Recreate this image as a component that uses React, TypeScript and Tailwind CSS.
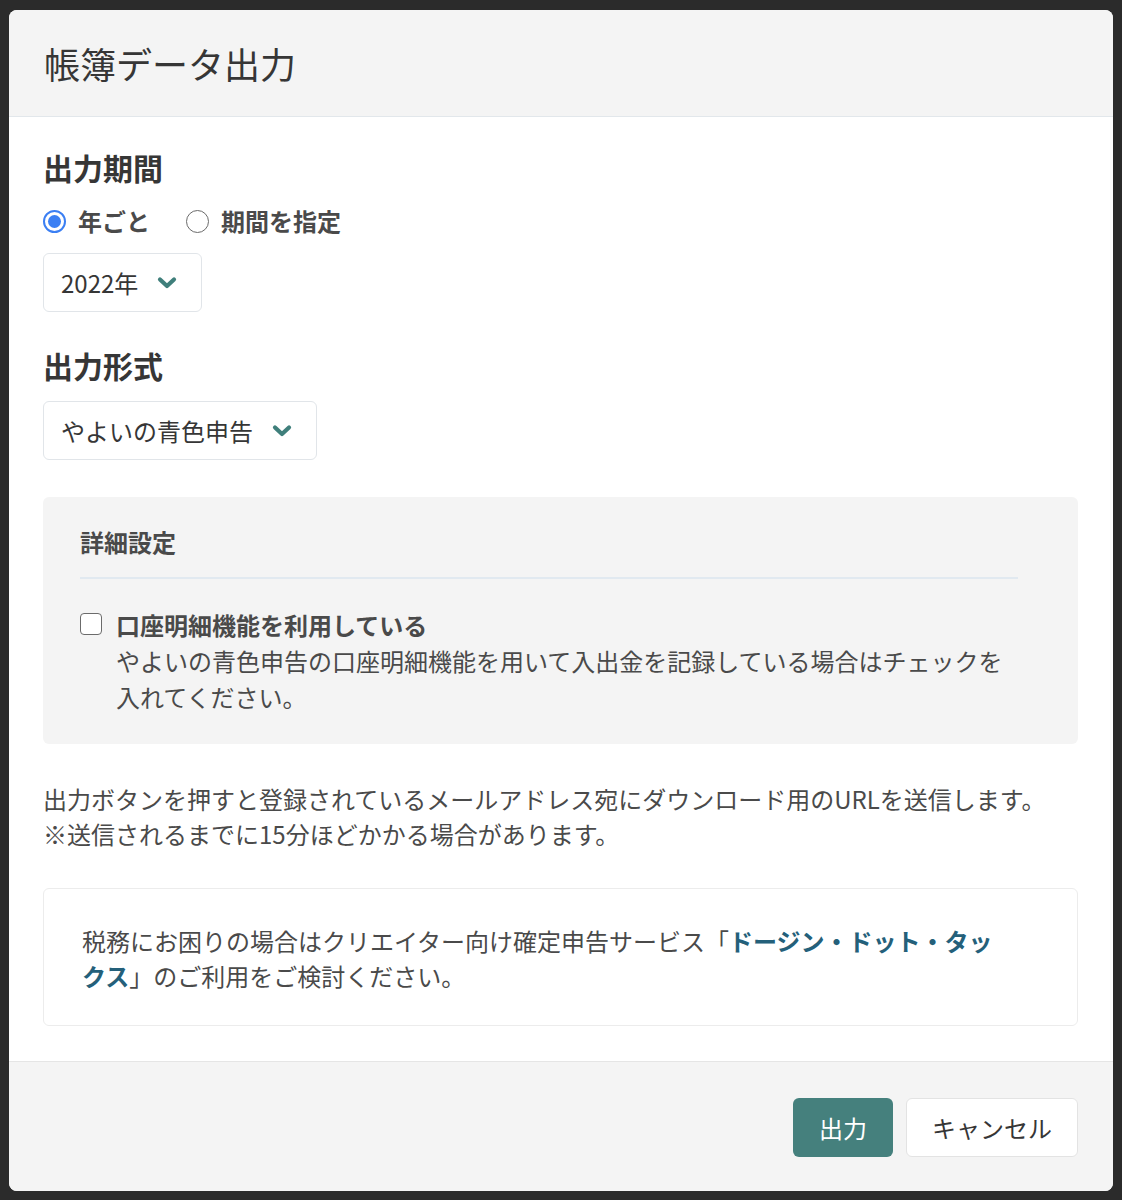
import React from "react";

const FONT = { fontFamily: '"Noto Sans CJK JP", "Noto Sans", sans-serif' };

function Chevron() {
  return (
    <svg width="20" height="14" viewBox="0 0 20 14" className="shrink-0">
      <path d="M3 3.5 L10 10 L17 3.5" fill="none" stroke="#3f7f7b" strokeWidth="4.2" strokeLinecap="round" strokeLinejoin="round" />
    </svg>
  );
}

function Select({ label }: { label: string }) {
  return (
    <div className="inline-flex h-[59px] items-center gap-[19px] rounded-[6px] border border-[#e1e5e9] bg-white pl-[17px] pr-[24px] text-[24px] text-[#363636]">
      <span>{label}</span>
      <Chevron />
    </div>
  );
}

function Radio({ checked, label }: { checked?: boolean; label: string }) {
  return (
    <label className="flex items-center gap-[12px]">
      {checked ? (
        <span className="flex size-[23px] items-center justify-center rounded-full border-2 border-[#3b7ff3] bg-white">
          <span className="size-[13px] rounded-full bg-[#3b7ff3]" />
        </span>
      ) : (
        <span className="size-[23px] rounded-full border-[1.5px] border-[#6b6b6b] bg-white" />
      )}
      <span className="text-[24px] font-bold text-[#4a4a4a]">{label}</span>
    </label>
  );
}

export default function App() {
  return (
    <div className="min-h-[1200px] bg-[#2b2b2b] px-[9px] pt-[10px]" style={FONT}>
      <div className="w-[1104px] overflow-hidden rounded-[8px] bg-white">
        <div className="flex h-[107px] items-center border-b border-[#e2e7eb] bg-[#f4f4f4] px-[35px]">
          <h1 className="text-[36px] font-normal text-[#363636]">帳簿データ出力</h1>
        </div>

        <div className="px-[34px] pb-[35px] pt-[28px] text-[#4a4a4a]">
          <h2 className="text-[30px] font-bold leading-[45px] text-[#363636]">出力期間</h2>
          <div className="mt-[13px] flex h-[36px] items-center gap-[36px]">
            <Radio checked label="年ごと" />
            <Radio label="期間を指定" />
          </div>
          <div className="mt-[14px]">
            <Select label="2022年" />
          </div>

          <h2 className="mt-[31px] text-[30px] font-bold leading-[45px] text-[#363636]">出力形式</h2>
          <div className="mt-[13px]">
            <Select label="やよいの青色申告" />
          </div>

          <div className="mt-[37px] w-[1035px] rounded-[6px] bg-[#f4f4f4] pb-[29px] pl-[37px] pr-[60px] pt-[27px]">
            <h3 className="text-[24px] font-bold leading-[36px] text-[#4a4a4a]">詳細設定</h3>
            <div className="mt-[17px] h-[2px] bg-[#e1e9f0]" />
            <div className="mt-[28px] flex gap-[14px]">
              <span className="mt-[6px] size-[22px] shrink-0 rounded-[4px] border-[1.5px] border-[#6b6b6b] bg-white" />
              <div>
                <div className="text-[24px] font-bold leading-[36px] text-[#4a4a4a]">口座明細機能を利用している</div>
                <p className="text-[24px] leading-[36px] text-[#4a4a4a]">
                  やよいの青色申告の口座明細機能を用いて入出金を記録している場合はチェックを入れてください。
                </p>
              </div>
            </div>
          </div>

          <p className="mt-[37px] text-[24px] leading-[35px] text-[#4a4a4a]">
            出力ボタンを押すと登録されているメールアドレス宛にダウンロード用のURLを送信します。
            <br />
            ※送信されるまでに15分ほどかかる場合があります。
          </p>

          <div className="mt-[37px] w-[1035px] rounded-[6px] border border-[#ececec] pb-[32px] pl-[38px] pr-[64px] pt-[34px]">
            <p className="text-[24px] leading-[35px] text-[#4a4a4a]">
              税務にお困りの場合はクリエイター向け確定申告サービス「
              <a className="font-bold text-[#24607a]">ドージン・ドット・タックス</a>
              」のご利用をご検討ください。
            </p>
          </div>
        </div>

        <div className="flex h-[130px] items-center justify-end gap-[13px] border-t border-[#e5e5e5] bg-[#f4f4f4] px-[35px] pt-[2px]">
          <button className="h-[59px] rounded-[6px] bg-[#45807d] px-[26px] text-[24px] text-white">出力</button>
          <button className="h-[59px] rounded-[6px] border border-[#e3e3e3] bg-white px-[25px] text-[24px] text-[#363636]">キャンセル</button>
        </div>
      </div>
    </div>
  );
}
